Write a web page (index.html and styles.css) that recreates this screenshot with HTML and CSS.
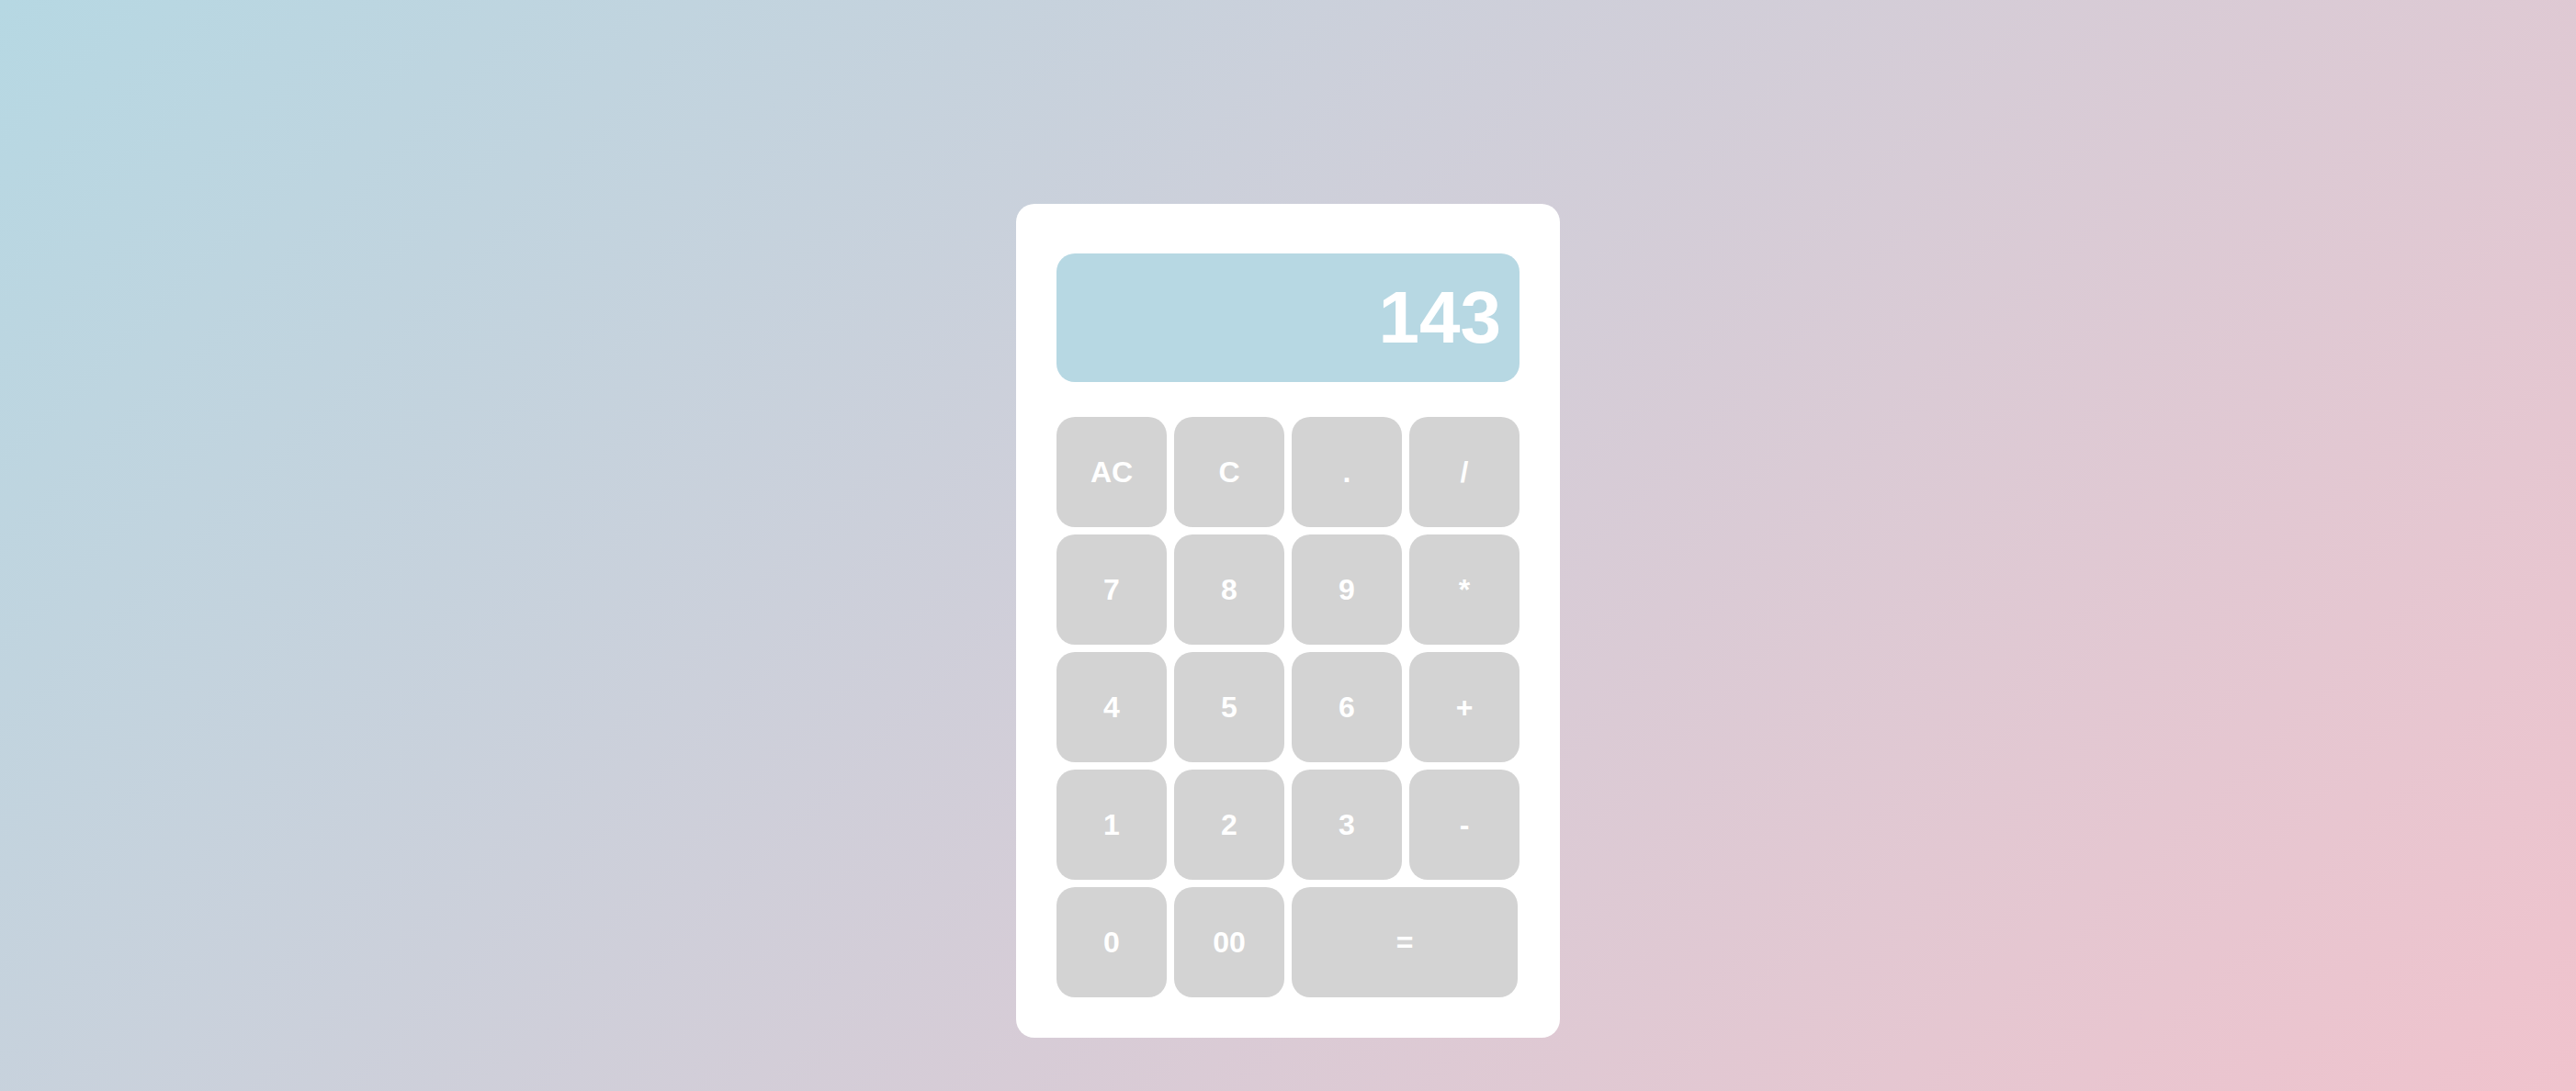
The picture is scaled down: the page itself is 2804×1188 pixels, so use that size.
FILE: index.html
```html
<!DOCTYPE html>
<html lang="en">
<head>
<meta charset="utf-8">
<title>Calculator</title>
<link rel="stylesheet" href="styles.css">
</head>
<body>
<div class="calculator">
  <div class="display">143</div>
  <div class="keys">
    <button class="key">AC</button>
    <button class="key">C</button>
    <button class="key">.</button>
    <button class="key">/</button>
    <button class="key">7</button>
    <button class="key">8</button>
    <button class="key">9</button>
    <button class="key">*</button>
    <button class="key">4</button>
    <button class="key">5</button>
    <button class="key">6</button>
    <button class="key">+</button>
    <button class="key">1</button>
    <button class="key">2</button>
    <button class="key">3</button>
    <button class="key">-</button>
    <button class="key">0</button>
    <button class="key">00</button>
    <button class="key key-wide">=</button>
  </div>
</div>
</body>
</html>
```
FILE: styles.css
```css
html, body {
  margin: 0;
  padding: 0;
  height: 100%;
}
body {
  background: linear-gradient(135deg, #b6d8e3 0%, #f0c3cd 100%);
  font-family: "Liberation Sans", Arial, sans-serif;
  display: flex;
  justify-content: center;
  align-items: flex-start;
  padding-top: 222px;
  box-sizing: border-box;
  overflow: hidden;
}
.calculator {
  width: 592px;
  box-sizing: border-box;
  background: #ffffff;
  border-radius: 20px;
  padding: 54px 44px 44px;
}
.display {
  height: 140px;
  background: #b7d8e3;
  border-radius: 20px;
  color: #ffffff;
  font-weight: bold;
  font-size: 80px;
  display: flex;
  align-items: center;
  justify-content: flex-end;
  padding: 0 20px;
  box-sizing: border-box;
  margin-bottom: 38px;
}
.keys {
  display: grid;
  grid-template-columns: repeat(4, 120px);
  grid-auto-rows: 120px;
  gap: 8px;
}
.key {
  border: none;
  background: #d3d3d3;
  border-radius: 20px;
  color: #ffffff;
  font-family: "Liberation Sans", Arial, sans-serif;
  font-weight: bold;
  font-size: 32px;
  padding: 0;
  cursor: pointer;
}
.key-wide {
  grid-column: span 2;
  width: 246px;
}
```
